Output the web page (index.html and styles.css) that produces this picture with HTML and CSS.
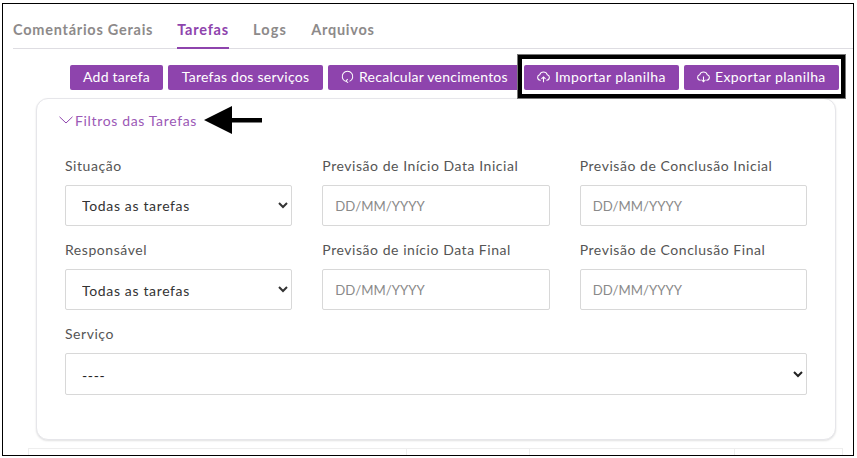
FILE: index.html
```html
<!DOCTYPE html>
<html lang="pt">
<head>
<meta charset="utf-8">
<title>Tarefas</title>
<link rel="stylesheet" href="styles.css">
</head>
<body>
<div class="frame">
  <nav class="tabs">
    <a class="tab">Comentários Gerais</a>
    <a class="tab active">Tarefas</a>
    <a class="tab logs">Logs</a>
    <a class="tab">Arquivos</a>
  </nav>
  <div class="actions">
    <button class="btn">Add tarefa</button>
    <button class="btn mid">Tarefas dos serviços</button>
    <button class="btn"><svg class="ico" viewBox="0 0 16 16"><path d="M5.500 14A6.500 6.500 0 1 1 10.500 14"/><path d="M8.200 11.200 6 13.800l2.800 1.700"/></svg>Recalcular vencimentos</button>
    <div class="highlight">
      <button class="btn wide-text"><svg class="ico" viewBox="0 0 16 16"><path d="M4.500 12.500H4A3.400 3.400 0 0 1 3.400 5.800 4.800 4.800 0 0 1 12.600 5.800 3.400 3.400 0 0 1 12 12.500h-.5"/><path d="M8 15V8.500M5.500 11 8 8.500 10.500 11"/></svg>Importar planilha</button>
      <button class="btn wide-text"><svg class="ico" viewBox="0 0 16 16"><path d="M4.500 12.500H4A3.400 3.400 0 0 1 3.400 5.800 4.800 4.800 0 0 1 12.600 5.800 3.400 3.400 0 0 1 12 12.500h-.5"/><path d="M8 8v6.500M5.500 12 8 14.500 10.500 12"/></svg>Exportar planilha</button>
    </div>
  </div>
  <section class="card">
    <div class="card-head">
      <svg class="chev" viewBox="0 0 14 8"><path d="M.5.800 7 7 13.500.800"/></svg>
      <span class="card-title">Filtros das Tarefas</span>
      <svg class="arrow" viewBox="0 0 58 28"><path d="M58 12H28V0L0 14 28 28V16.500H58z"/></svg>
    </div>
    <div class="grid">
      <div class="field">
        <label>Situação</label>
        <select class="control sel"><option>Todas as tarefas</option></select>
      </div>
      <div class="field">
        <label>Previsão de Início Data Inicial</label>
        <input class="control date" placeholder="DD/MM/YYYY">
      </div>
      <div class="field">
        <label>Previsão de Conclusão Inicial</label>
        <input class="control date" placeholder="DD/MM/YYYY">
      </div>
      <div class="field">
        <label>Responsável</label>
        <select class="control sel low"><option>Todas as tarefas</option></select>
      </div>
      <div class="field">
        <label>Previsão de início Data Final</label>
        <input class="control date" placeholder="DD/MM/YYYY">
      </div>
      <div class="field">
        <label>Previsão de Conclusão Final</label>
        <input class="control date" placeholder="DD/MM/YYYY">
      </div>
      <div class="field wide">
        <label>Serviço</label>
        <select class="control sel dash"><option>----</option></select>
      </div>
    </div>
  </section>
  <div class="table-top"><i></i><i></i><i></i><i></i></div>
</div>
</body>
</html>
```
FILE: styles.css
```css
* { box-sizing: border-box; }
html, body { margin: 0; height: 100%; background: #fff; }
body { font-family: "Lato", "Open Sans", sans-serif; overflow: hidden; }
.frame {
  width: 852px; height: 453px; margin: 3px 0 0 2px;
  border: 1px solid #000; overflow: hidden;
  padding: 0 10px;
}
.tabs { display: flex; gap: 24px; border-bottom: 1px solid #dedde2; height: 45px; margin-right: -10px; }
.tab { font-size: 14.500px; font-weight: 700; color: #8d8a8a; letter-spacing: .75px; height: 45px; padding-top: 16px; line-height: 20px; border-bottom: 2px solid transparent; }
.tab.active { color: #8e44ad; border-bottom-color: #8e44ad; letter-spacing: .78px; }
.tab.logs { letter-spacing: 1.200px; }
.actions { display: flex; align-items: flex-start; gap: 5px; padding: 5px 0 0 57px; height: 49px; }
.btn {
  display: inline-flex; align-items: center; justify-content: center; gap: 5px;
  height: 25px; margin-top: 11px; border: 0; border-radius: 2px; background: #8e44ad; color: #fff;
  font: 400 14px "Lato", sans-serif; letter-spacing: .25px; padding: 0 13px 2px; white-space: nowrap; flex: none;
}
.mid { min-width: 155px; }
.wide-text { letter-spacing: .42px; }
.ico { width: 13px; height: 13px; fill: none; stroke: #fff; stroke-width: 1.300; flex: none; }
.highlight { display: flex; flex: none; gap: 5px; padding: 6px 2px 4px; margin-left: -9px; border: 5px solid #000; outline: 1px solid #777; outline-offset: -1px; background: #fff; z-index: 1; }
.highlight .btn { margin-top: 0; }
.card { margin: 0 7px 0 23px; height: 342px; background: #fff; border: 1px solid #e6e6ea; border-radius: 12px; box-shadow: 0 1px 2px rgba(0,0,0,.12); padding: 0 28px; }
.card-head { display: flex; align-items: center; height: 42px; margin-left: -6px; }
.chev { width: 14px; height: 8px; fill: none; stroke: #8e44ad; stroke-width: 1; flex: none; }
.card-title { color: #9b59b6; font-size: 14px; letter-spacing: .65px; margin-left: 2px; }
.arrow { width: 58px; height: 28px; margin-left: 7px; flex: none; }
.grid { display: grid; grid-template-columns: repeat(3, 1fr); column-gap: 30px; margin-top: 15px; }
.field { display: flex; flex-direction: column; min-width: 0; }
.field label { font-size: 14px; color: #555; letter-spacing: .55px; line-height: 20px; height: 29px; }
.wide { grid-column: 1 / -1; }
.control { height: 41px; border: 1px solid #d8d8d8; border-radius: 2px; background: #fff; font: 14px "Lato", sans-serif; letter-spacing: .65px; padding: 0 12px; margin-bottom: 14px; outline: none; color: #555; width: 100%; }
.date { font-size: 13.200px; letter-spacing: 0; }
.control::placeholder { color: #8a8a8a; opacity: 1; }
.sel { color: #333; }
.low { padding-top: 2px; }
.dash { color: #222; height: 42px; padding-top: 3px; }
.table-top { display: flex; height: 10px; margin: 8px 0 0 15px; border: 1px solid #eee; border-bottom: 0; }
.table-top i { border-right: 1px solid #eee; }
.table-top i:nth-child(1) { width: 378px; }
.table-top i:nth-child(2) { width: 123px; }
.table-top i:nth-child(3) { width: 205px; }
.table-top i:nth-child(4) { flex: 1; border-right: 0; }
```
